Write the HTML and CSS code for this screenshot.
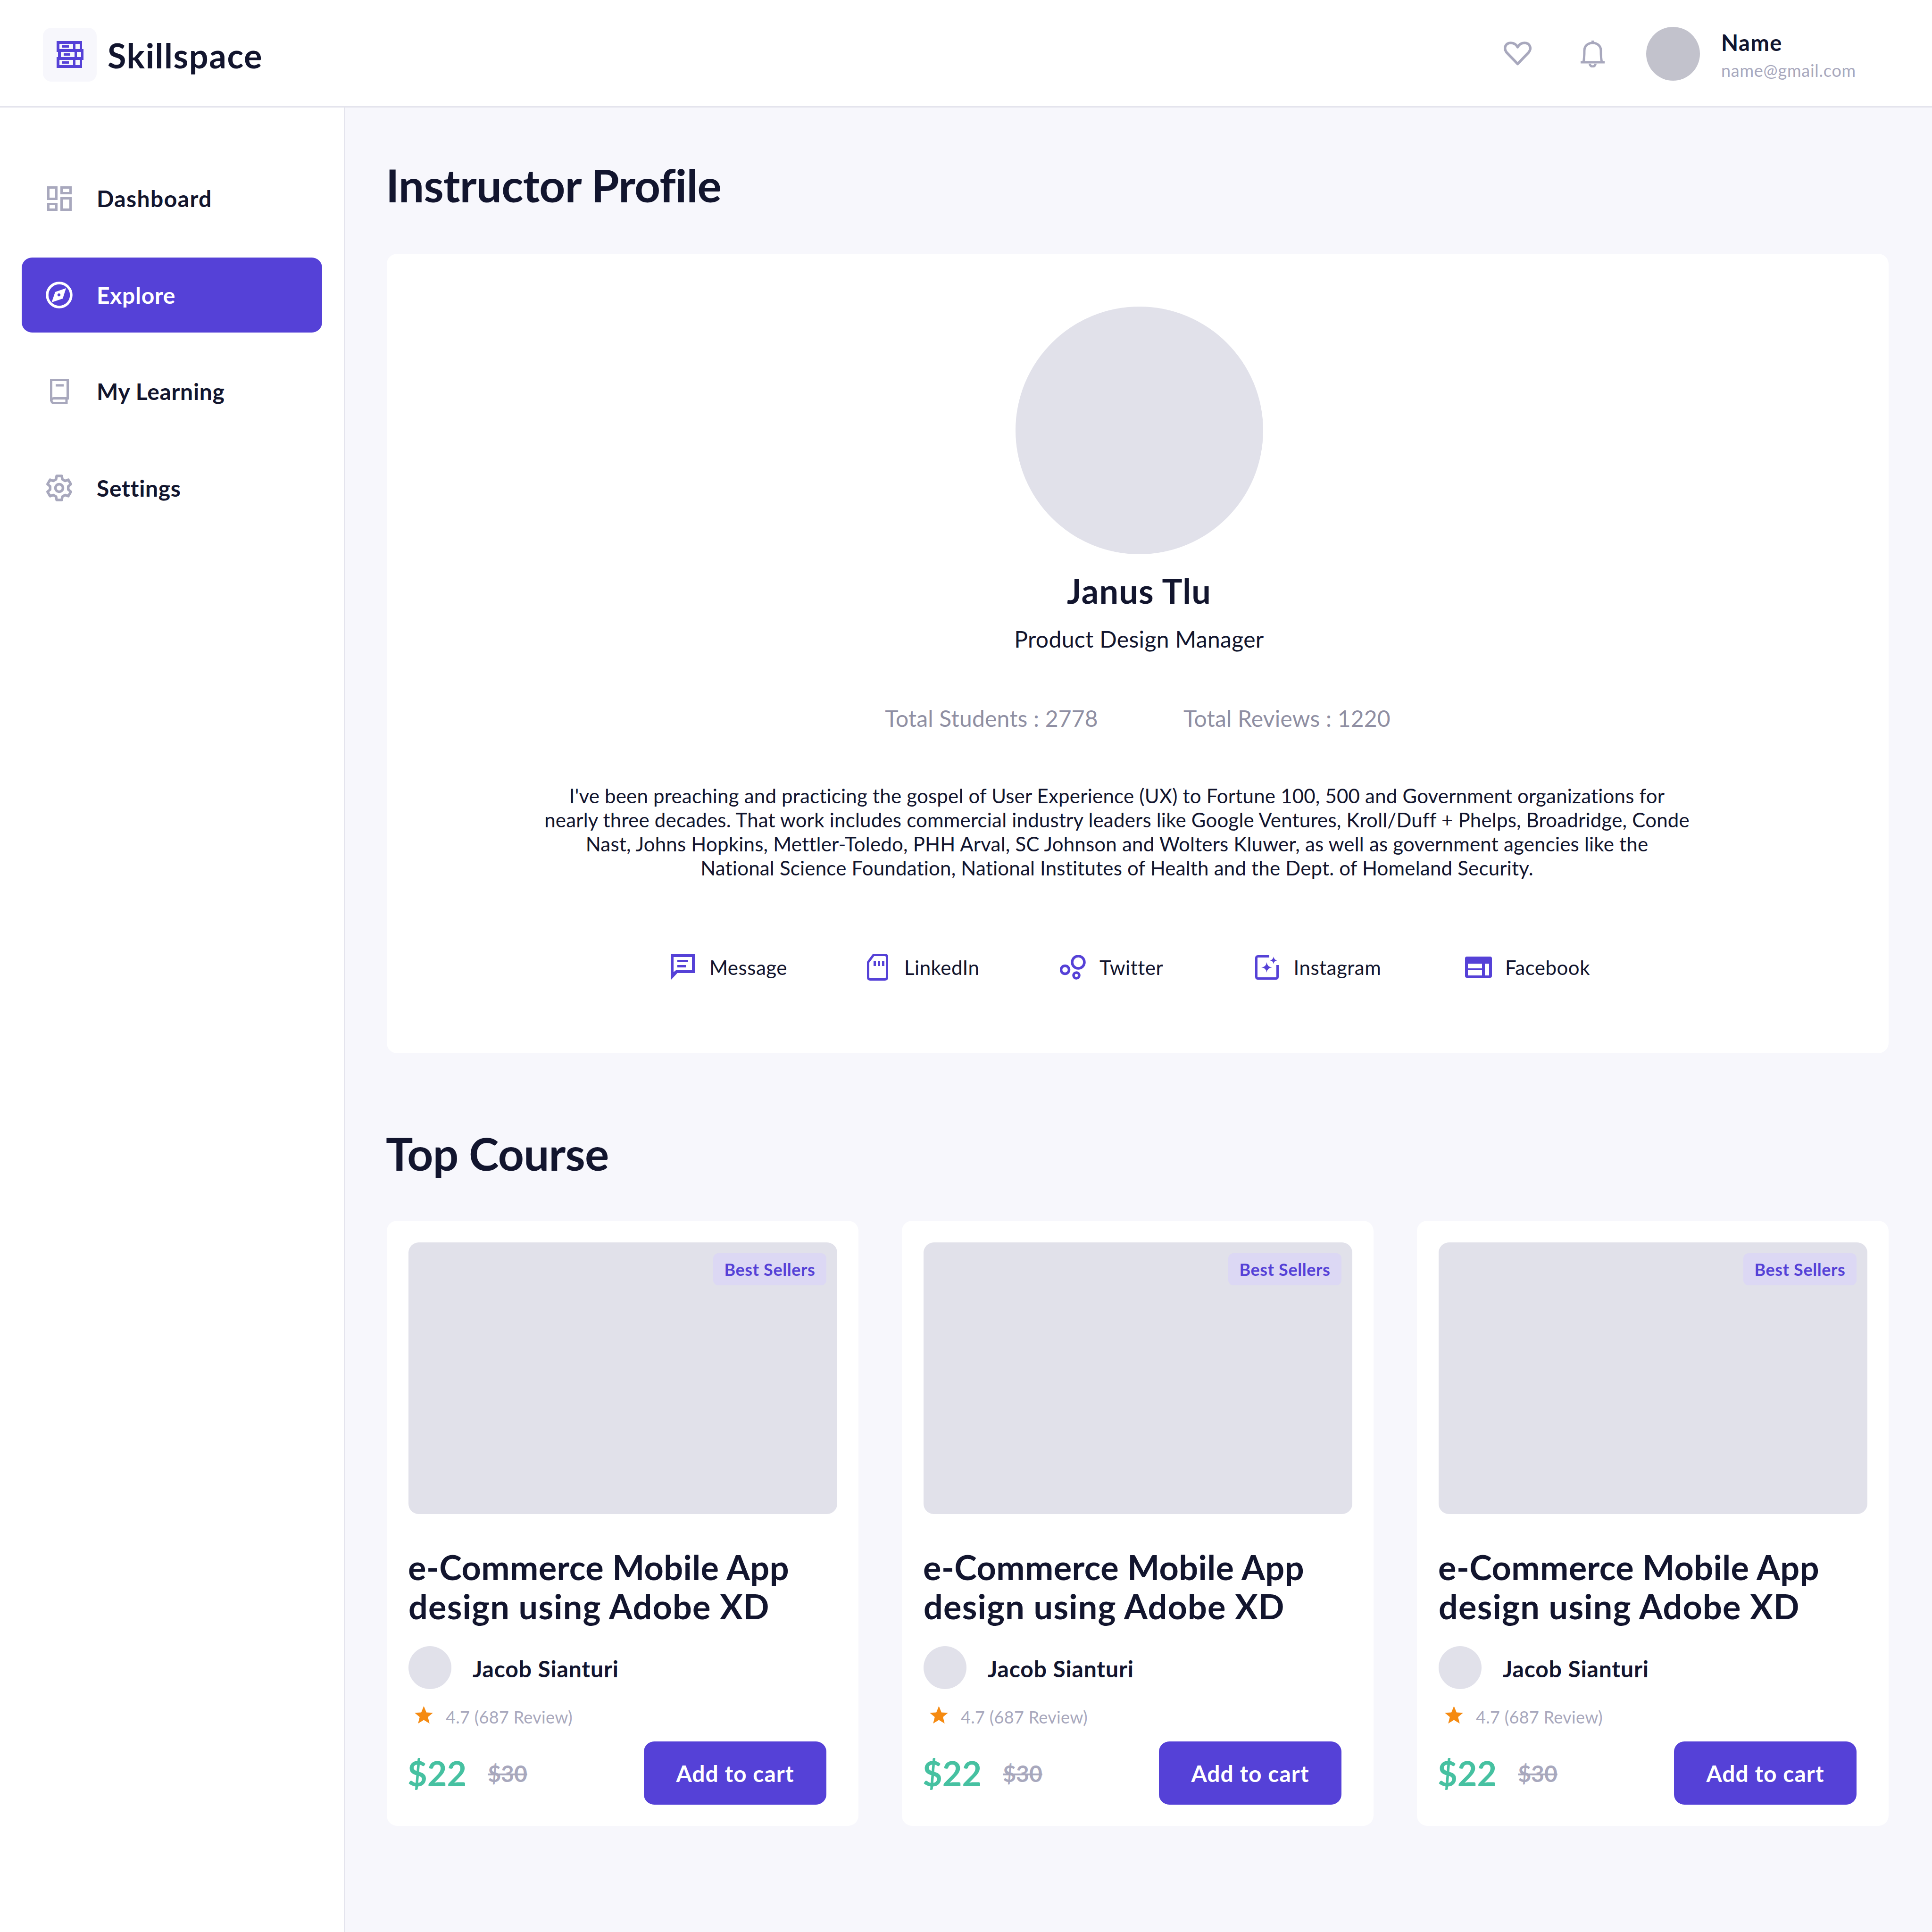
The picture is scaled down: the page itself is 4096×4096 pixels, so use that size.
FILE: index.html
```html
<!DOCTYPE html>
<html lang="en">
<head>
<meta charset="utf-8">
<title>Skillspace</title>
<link rel="stylesheet" href="styles.css">
</head>
<body>
<div class="app">
  <header class="topbar">
    <div class="brand">
      <div class="logo-box">
        <svg class="logo" viewBox="0 0 57 57">
          <path fill-rule="evenodd" d="M0 0H54V23H0ZM6 6V17H35V6ZM40 6V17H49V6Z"/>
          <rect x="12" y="9" width="14" height="5"/>
          <path fill-rule="evenodd" d="M3 17H57V40H3ZM9 23V34H38V23ZM43 23V34H52V23Z"/>
          <rect x="15" y="26" width="14" height="5"/>
          <path fill-rule="evenodd" d="M0 34H54V57H0ZM6 40V51H35V40ZM40 40V51H49V40Z"/>
          <rect x="12" y="43" width="14" height="5"/>
        </svg>
      </div>
      <span class="brand-name">Skillspace</span>
    </div>
    <div class="top-actions">
      <svg class="top-heart" viewBox="0 0 59 52"><path d="M29.5 47.5 L6 23 C-1 14 4 3 15 3 C22 3 27 7 29.5 12 C32 7 37 3 44 3 C55 3 60 14 53 23 Z"/></svg>
      <svg class="top-bell" viewBox="0 0 51 57"><path d="M25.5 0V5M6 46C8 38 8 30 8 21C8 11 16 5 25.5 5C35 5 43 11 43 21C43 30 43 38 45 46M0 46H51M19.5 49A6 6 0 0 0 31.5 49"/></svg>
      <div class="top-avatar"></div>
      <div class="top-user">
        <div class="top-name">Name</div>
        <div class="top-mail">name@gmail.com</div>
      </div>
    </div>
  </header>
  <div class="layout">
    <aside class="sidebar">
      <nav class="nav">
        <a class="nav-item nav-wide">
          <span class="nav-icon"><svg class="ic-dash" viewBox="0 0 52 52"><rect x="2.5" y="2.5" width="17" height="24"/><rect x="2.5" y="37.5" width="17" height="12"/><rect x="30.5" y="2.5" width="19" height="12"/><rect x="30.5" y="25.5" width="19" height="24"/></svg></span>
          <span class="nav-label">Dashboard</span>
        </a>
        <a class="nav-item active">
          <span class="nav-icon"><svg class="ic-compass" viewBox="0 0 57 57"><circle cx="28.5" cy="28.5" r="25.5"/><path class="needle" fill-rule="evenodd" d="M43 14L36 36L12.5 44L20 22ZM28 25a3.2 3.2 0 1 0 .01 0Z"/></svg></span>
          <span class="nav-label">Explore</span>
        </a>
        <a class="nav-item">
          <span class="nav-icon"><svg class="ic-book" viewBox="0 0 40 54"><path d="M2.5 47V2.5H37.5V41.5H8A5 5 0 0 0 8 51.5H35V42M12 14H29"/></svg></span>
          <span class="nav-label">My Learning</span>
        </a>
        <a class="nav-item">
          <span class="nav-icon"><svg class="ic-gear" viewBox="-28.5 -28.5 57 57"><path d="M-5.4 -25.4L5.4 -25.4L6.7 -18.3L12.5 -14.95L19.3 -17.38L24.7 -8.02L19.2 -3.35L19.2 3.35L24.7 8.02L19.3 17.38L12.5 14.95L6.7 18.3L5.4 25.4L-5.4 25.4L-6.7 18.3L-12.5 14.95L-19.3 17.38L-24.7 8.02L-19.2 3.35L-19.2 -3.35L-24.7 -8.02L-19.3 -17.38L-12.5 -14.95L-6.7 -18.3Z"/><circle r="8"/></svg></span>
          <span class="nav-label">Settings</span>
        </a>
      </nav>
    </aside>
    <main class="content">
      <h1 class="page-title">Instructor Profile</h1>
      <section class="profile">
        <div class="profile-head">
          <div class="profile-avatar"></div>
          <h2 class="profile-name">Janus Tlu</h2>
          <p class="profile-role">Product Design Manager</p>
          <div class="profile-stats">
            <span>Total Students : 2778</span>
            <span>Total Reviews : 1220</span>
          </div>
        </div>
        <p class="bio">I've been preaching and practicing the gospel of User Experience (UX) to Fortune 100, 500 and Government organizations for<br>nearly three decades. That work includes commercial industry leaders like Google Ventures, Kroll/Duff + Phelps, Broadridge, Conde<br>Nast, Johns Hopkins, Mettler-Toledo, PHH Arval, SC Johnson and Wolters Kluwer, as well as government agencies like the<br>National Science Foundation, National Institutes of Health and the Dept. of Homeland Security.</p>
        <div class="links">
          <a class="link"><span class="link-icon"><svg class="ic-msg" viewBox="0 0 51 55"><path fill-rule="evenodd" d="M0 0H51V40H14L0 55ZM6 6V38L11 34H45V6Z"/><rect x="14" y="12" width="23" height="5"/><rect x="14" y="23" width="18" height="5"/></svg></span><span>Message</span></a>
          <a class="link"><span class="link-icon"><svg class="ic-sd" viewBox="0 0 45 57"><path class="sd-line" d="M2.5 18L14 2.5H38Q42.5 2.5 42.5 7V50Q42.5 54.5 38 54.5H7Q2.5 54.5 2.5 50Z"/><rect x="14" y="15" width="5" height="11"/><rect x="23" y="15" width="5" height="11"/><rect x="32" y="15" width="5" height="11"/></svg></span><span>LinkedIn</span></a>
          <a class="link"><span class="link-icon"><svg class="ic-bub" viewBox="0 0 55 52"><circle cx="39" cy="15" r="13"/><circle cx="11" cy="31" r="8.5"/><circle cx="35" cy="43" r="6"/></svg></span><span>Twitter</span></a>
          <a class="link"><span class="link-icon"><svg class="ic-ins" viewBox="0 0 50 52"><path class="ins-line" d="M30 2.5H6Q2.5 2.5 2.5 6V46Q2.5 49.5 6 49.5H44Q47.5 49.5 47.5 46V21"/><path d="M24.5 15Q25.5 25 36 26Q25.5 27 24.5 37Q23.5 27 13 26Q23.5 25 24.5 15Z"/><path d="M39 3Q39.7 10 47 11Q39.7 12 39 19Q38.3 12 31 11Q38.3 10 39 3Z"/></svg></span><span>Instagram</span></a>
          <a class="link"><span class="link-icon"><svg class="ic-fb" viewBox="0 0 57 45"><path fill-rule="evenodd" d="M4 0H53Q57 0 57 4V41Q57 45 53 45H4Q0 45 0 41V4Q0 0 4 0ZM6 15V25H36V15ZM6 29V40H36V29ZM42 15V40H51V15Z"/></svg></span><span>Facebook</span></a>
        </div>
      </section>
      <h2 class="section-title">Top Course</h2>
      <section class="courses">
        <article class="course">
          <div class="thumb"><span class="badge">Best Sellers</span></div>
          <h3 class="course-title"><span class="t1">e-Commerce Mobile App</span><br><span class="t2">design using Adobe XD</span></h3>
          <div class="author"><div class="author-avatar"></div><span class="author-name">Jacob Sianturi</span></div>
          <div class="rating"><svg class="star" viewBox="0 0 39 37"><path d="M19.5 0L25 13.5L39 14.3L28.2 23.3L31.7 37L19.5 29.4L7.3 37L10.8 23.3L0 14.3L14 13.5Z"/></svg><span>4.7 (687 Review)</span></div>
          <div class="buy"><div class="prices"><span class="price">$22</span><s class="old-price">$30</s></div><button class="cart">Add to cart</button></div>
        </article>
        <article class="course">
          <div class="thumb"><span class="badge">Best Sellers</span></div>
          <h3 class="course-title"><span class="t1">e-Commerce Mobile App</span><br><span class="t2">design using Adobe XD</span></h3>
          <div class="author"><div class="author-avatar"></div><span class="author-name">Jacob Sianturi</span></div>
          <div class="rating"><svg class="star" viewBox="0 0 39 37"><path d="M19.5 0L25 13.5L39 14.3L28.2 23.3L31.7 37L19.5 29.4L7.3 37L10.8 23.3L0 14.3L14 13.5Z"/></svg><span>4.7 (687 Review)</span></div>
          <div class="buy"><div class="prices"><span class="price">$22</span><s class="old-price">$30</s></div><button class="cart">Add to cart</button></div>
        </article>
        <article class="course">
          <div class="thumb"><span class="badge">Best Sellers</span></div>
          <h3 class="course-title"><span class="t1">e-Commerce Mobile App</span><br><span class="t2">design using Adobe XD</span></h3>
          <div class="author"><div class="author-avatar"></div><span class="author-name">Jacob Sianturi</span></div>
          <div class="rating"><svg class="star" viewBox="0 0 39 37"><path d="M19.5 0L25 13.5L39 14.3L28.2 23.3L31.7 37L19.5 29.4L7.3 37L10.8 23.3L0 14.3L14 13.5Z"/></svg><span>4.7 (687 Review)</span></div>
          <div class="buy"><div class="prices"><span class="price">$22</span><s class="old-price">$30</s></div><button class="cart">Add to cart</button></div>
        </article>
      </section>
    </main>
  </div>
</div>
</body>
</html>
```
FILE: styles.css
```css
* { box-sizing: border-box; }
html, body { margin: 0; padding: 0; }
body {
  font-family: "Lato", "Open Sans", sans-serif;
  color: #12152e;
  background: #f7f7fc;
}
h1, h2, h3, p { margin: 0; }
svg { display: block; }
.app { min-height: 4096px; display: flex; flex-direction: column; }

.topbar {
  height: 228px;
  flex: none;
  background: #fff;
  border-bottom: 3px solid #e4e4ed;
  display: flex;
  justify-content: space-between;
  align-items: flex-start;
  padding: 57px 0 0 91px;
}
.brand { display: flex; align-items: center; gap: 23px; }
.logo-box {
  width: 114px; height: 114px;
  border-radius: 18px;
  background: #f7f7fc;
  display: flex; align-items: center; justify-content: center;
}
.logo { width: 57px; height: 57px; fill: #5541d7; }
.brand-name { font-size: 72px; font-weight: 700; line-height: 114px; letter-spacing: 1.6px; padding-top: 3px; }
.top-actions { display: flex; align-items: center; width: 908px; height: 114px; }
.top-heart { width: 59px; height: 52px; margin-right: 104px; fill: none; stroke: #a8a8bd; stroke-width: 5.5; stroke-linejoin: round; }
.top-bell { width: 51px; height: 57px; margin-right: 88px; fill: none; stroke: #a8a8bd; stroke-width: 5; }
.top-avatar { width: 114px; height: 114px; border-radius: 50%; background: #c2c2cc; margin-right: 45px; }
.top-name { font-size: 47px; font-weight: 700; line-height: 60px; letter-spacing: 1.5px; padding-top: 4px; }
.top-mail { font-size: 36px; color: #a8a8bd; line-height: 46px; margin-top: 6px; letter-spacing: 0.75px; }

.layout { flex: 1; display: flex; }
.sidebar {
  width: 732px;
  flex: none;
  background: #fff;
  border-right: 3px solid #e4e4ed;
  padding: 113px 46px 0;
}
.nav { display: flex; flex-direction: column; gap: 45.5px; width: 637px; }
.nav-item {
  height: 159px;
  border-radius: 22px;
  display: flex;
  align-items: center;
  padding-left: 46px;
  gap: 46px;
  font-size: 48px;
  font-weight: 700;
  letter-spacing: 0.7px;
}
.nav-wide { letter-spacing: 1.4px; }
.nav-item.active { background: #5541d7; color: #fff; }
.nav-icon { width: 67px; height: 67px; display: flex; align-items: center; justify-content: center; }
.ic-dash { width: 52px; height: 52px; fill: none; stroke: #a8a8bd; stroke-width: 5; }
.ic-compass { width: 57px; height: 57px; fill: none; stroke: #fff; stroke-width: 5.5; }
.ic-compass .needle { fill: #fff; stroke: none; }
.ic-book { width: 40px; height: 54px; fill: none; stroke: #a8a8bd; stroke-width: 5; }
.ic-gear { width: 57px; height: 57px; fill: none; stroke: #a8a8bd; stroke-width: 5.5; stroke-linejoin: round; }

.content { flex: 1; padding: 104px 92px 0 88px; min-width: 0; }
.page-title, .section-title { font-size: 96px; font-weight: 700; line-height: 120px; letter-spacing: -0.75px; text-indent: -2px; }
.page-title { margin-bottom: 86px; }
.section-title { margin-top: 152px; margin-bottom: 83px; }

.profile {
  background: #fff;
  border-radius: 22px;
  height: 1695px;
  padding-top: 112px;
}
.profile-head { display: flex; flex-direction: column; align-items: center; padding-left: 6px; }
.profile-avatar { width: 525px; height: 525px; border-radius: 50%; background: #e1e1ea; }
.profile-name { font-size: 72px; font-weight: 700; line-height: 90px; margin-top: 32px; letter-spacing: 1.2px; }
.profile-role { font-size: 48px; line-height: 60px; margin-top: 28px; letter-spacing: 0.35px; }
.profile-stats { display: flex; gap: 181px; font-size: 48px; line-height: 60px; color: #8f8fa3; margin: 108px 6px 0 0; letter-spacing: 0.2px; }
.bio {
  width: 2440px;
  margin: 109px 0 0 328px;
  text-align: center;
  font-size: 42px;
  line-height: 51px;
  white-space: nowrap;
  letter-spacing: 0.2px;
}
.links {
  display: grid;
  grid-template-columns: 413px 414px 411.5px 448.5px auto;
  margin-top: 156px;
  padding-left: 596px;
  font-size: 42px;
  height: 57px;
  letter-spacing: 0.5px;
}
.link { display: flex; align-items: center; gap: 25px; }
.link-icon { width: 63px; height: 57px; display: flex; align-items: center; justify-content: center; }
.ic-msg, .ic-sd, .ic-bub, .ic-ins, .ic-fb { fill: #5541d7; }
.ic-msg { width: 51px; height: 55px; }
.ic-sd { width: 45px; height: 57px; }
.ic-sd .sd-line { fill: none; stroke: #5541d7; stroke-width: 5; }
.ic-bub { width: 55px; height: 52px; fill: none; stroke: #5541d7; stroke-width: 5.5; }
.ic-ins { width: 50px; height: 52px; }
.ic-ins .ins-line { fill: none; stroke: #5541d7; stroke-width: 5; }
.ic-fb { width: 57px; height: 45px; }

.courses { display: grid; grid-template-columns: repeat(3, 1000px); gap: 92px; }
.course { background: #fff; border-radius: 22px; padding: 46px 45px 45px 46px; }
.thumb { position: relative; height: 576px; border-radius: 22px; background: #e1e1ea; }
.badge {
  position: absolute; top: 23px; right: 23px;
  height: 68px; width: 240px;
  border-radius: 11px;
  background: #dcd8f4;
  color: #5541d7;
  font-size: 36px; font-weight: 700;
  letter-spacing: 0.6px;
  display: flex; align-items: center; justify-content: center;
}
.course-title { font-size: 72px; font-weight: 700; line-height: 83px; margin-top: 71px; text-indent: -1px; }
.t1 { letter-spacing: 0.43px; }
.t2 { letter-spacing: 1.18px; }
.author { display: flex; align-items: center; gap: 45px; margin-top: 43px; }
.author-avatar { width: 91px; height: 91px; border-radius: 50%; background: #e1e1ea; }
.author-name { font-size: 48px; font-weight: 700; letter-spacing: 0.85px; padding-top: 4px; }
.rating { display: flex; align-items: center; gap: 27px; height: 46px; margin: 36px 0 0 13px; font-size: 36px; color: #a8a8bd; letter-spacing: 0.3px; }
.star { width: 39px; height: 37px; fill: #f58a11; margin-top: -9px; }
.buy { display: flex; justify-content: space-between; align-items: center; margin: 29px 23px 0 0; }
.prices { display: flex; align-items: center; gap: 45px; margin-left: -2px; }
.price { font-size: 72px; font-weight: 700; color: #46c1a1; }
.old-price { font-size: 48px; font-weight: 700; color: #a8a8bd; }
.cart {
  width: 387px; height: 134px;
  border: 0; border-radius: 22px;
  background: #5541d7; color: #fff;
  font: 700 48px "Lato", "Open Sans", sans-serif;
  letter-spacing: 1px;
}
```
